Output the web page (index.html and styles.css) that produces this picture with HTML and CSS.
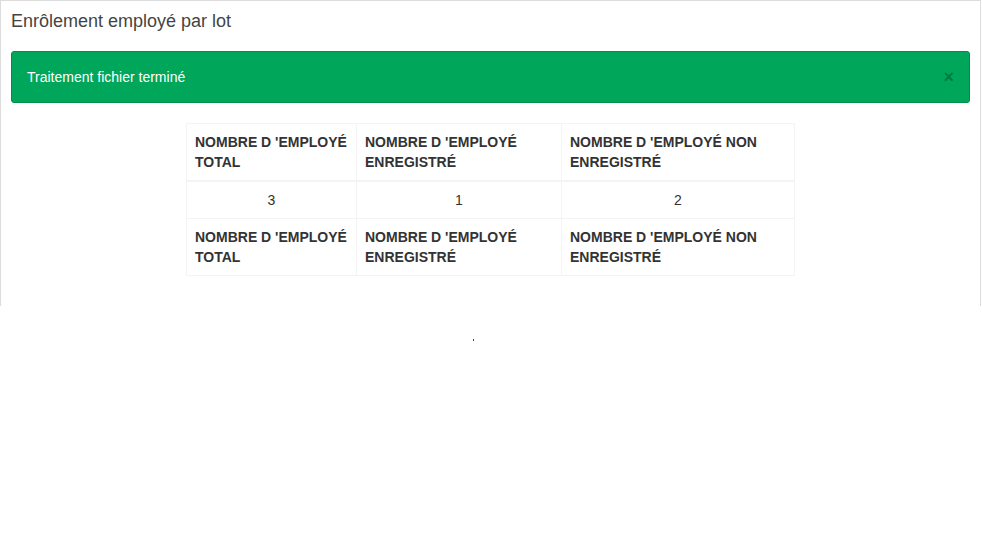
FILE: index.html
```html
<!DOCTYPE html>
<html lang="fr">
<head>
<meta charset="utf-8">
<title>Enrôlement employé par lot</title>
<link rel="stylesheet" href="styles.css">
</head>
<body>
<div class="panel">
  <h3 class="panel-title">Enrôlement employé par lot</h3>
  <div class="panel-body">
    <div class="alert">
      <span>Traitement fichier terminé</span>
      <span class="close">×</span>
    </div>
    <table class="stats">
      <thead>
        <tr>
          <th class="c1">NOMBRE D 'EMPLOYÉ TOTAL</th>
          <th class="c2">NOMBRE D 'EMPLOYÉ ENREGISTRÉ</th>
          <th class="c3">NOMBRE D 'EMPLOYÉ NON ENREGISTRÉ</th>
        </tr>
      </thead>
      <tbody>
        <tr>
          <td>3</td>
          <td>1</td>
          <td>2</td>
        </tr>
      </tbody>
      <tfoot>
        <tr>
          <th>NOMBRE D 'EMPLOYÉ TOTAL</th>
          <th>NOMBRE D 'EMPLOYÉ ENREGISTRÉ</th>
          <th>NOMBRE D 'EMPLOYÉ NON ENREGISTRÉ</th>
        </tr>
      </tfoot>
    </table>
  </div>
</div>
<div class="dot"></div>
</body>
</html>
```
FILE: styles.css
```css
html, body {
  margin: 0;
  padding: 0;
  background: #fff;
}
body {
  font-family: "Liberation Sans", Arial, sans-serif;
  font-size: 14px;
  color: #333;
}
.panel {
  width: 979px;
  border: 1px solid #dcdcdc;
  border-bottom: 0;
  background: #fff;
}
.panel-title {
  margin: 0;
  padding: 10px 10px 0 10px;
  font-size: 18px;
  font-weight: normal;
  line-height: 20px;
  color: #444;
}
.panel-body {
  padding: 20px 10px 10px 10px;
}
.alert {
  display: flex;
  justify-content: space-between;
  align-items: center;
  background: #00a65a;
  border: 1px solid #008d4c;
  border-radius: 3px;
  color: #fff;
  padding: 15px 15px 15px 15px;
  line-height: 20px;
  font-size: 14px;
}
.close {
  font-size: 18px;
  font-weight: bold;
  color: #000;
  opacity: 0.25;
  line-height: 18px;
  margin-right: 0;
}
.stats {
  margin: 20px auto 20px auto;
  border-collapse: collapse;
  border: 1px solid #f4f4f4;
}
.stats th, .stats td {
  border: 1px solid #f4f4f4;
  padding: 8px;
  line-height: 20px;
  vertical-align: top;
}
.stats th {
  text-align: left;
  font-weight: bold;
  color: #333;
}
.stats thead th {
  border-bottom: 2px solid #f4f4f4;
}
.stats td {
  text-align: center;
  color: #333;
}
.stats .c1 { width: 153px; }
.stats .c2 { width: 188px; }
.stats .c3 { width: 216px; }
.dot {
  width: 1px;
  height: 2px;
  background: #444;
  margin: 33px 0 0 473px;
}
```
